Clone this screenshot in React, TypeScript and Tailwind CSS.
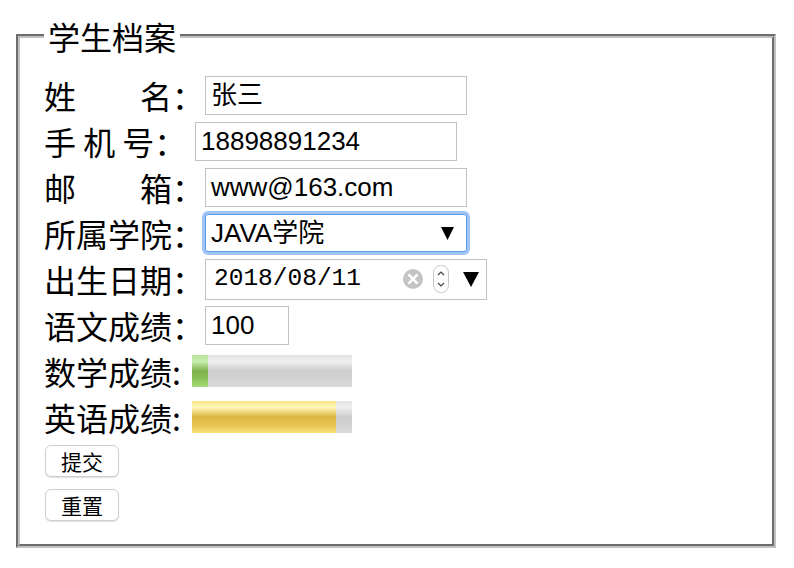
const cjk = "font-['Noto_Sans_CJK_SC',sans-serif]";
const field = "font-['Liberation_Sans','Noto_Sans_CJK_SC',sans-serif]";

const scores = [
  { label: '数学成绩:', value: 0.1, fill: 'bg-[linear-gradient(to_bottom,#b4e29a_0%,#c9eeae_20%,#7eb24a_50%,#8cc25a_75%,#a8dc7c_100%)]' },
  { label: '英语成绩:', value: 0.9, fill: 'bg-[linear-gradient(to_bottom,#fbe487_0%,#fff6b8_20%,#dcb53f_50%,#e6c552_75%,#f8e279_100%)]' },
];

function Row({ label, width, children }: { label: string; width: string; children: React.ReactNode }) {
  return (
    <div className="flex items-center h-[46px]">
      <span className={`${width} shrink-0 whitespace-pre text-[32px] leading-[46px] text-black ${cjk}`}>{label}</span>
      {children}
    </div>
  );
}

function TextBox({ value, width }: { value: string; width: string }) {
  return (
    <div className={`${width} h-[39px] border border-[#c2c2c2] bg-white flex items-center px-[5px] text-[26px] text-black ${field}`}>
      {value}
    </div>
  );
}

export default function App() {
  return (
    <div className="w-[794px] h-[568px] bg-white">
      <fieldset className="ml-4 mt-[18px] w-[760px] h-[530px] border-4 [border-style:groove] border-[#c0c0c0] px-6 pt-[18px]">
        <legend className={`px-1 text-[32px] leading-[36px] text-black ${cjk}`}>学生档案</legend>

        <Row label="姓　　名：" width="w-[161px]">
          <TextBox value="张三" width="w-[262px]" />
        </Row>
        <Row label="手 机 号：" width="w-[151px]">
          <TextBox value="18898891234" width="w-[262px]" />
        </Row>
        <Row label="邮　　箱：" width="w-[161px]">
          <TextBox value="www@163.com" width="w-[262px]" />
        </Row>
        <Row label="所属学院：" width="w-[161px]">
          <div className="w-[262px] h-[38px] rounded-[3px] border border-[#5b98ea] ring-[3px] ring-[#a3c5f6] bg-white flex items-center justify-between pl-[5px] pr-[12px]">
            <span className={`text-[26px] text-black ${field}`}>JAVA学院</span>
            <svg width="13" height="13" viewBox="0 0 13 13">
              <polygon points="0,0 13,0 6.5,13" fill="#000" />
            </svg>
          </div>
        </Row>
        <Row label="出生日期：" width="w-[161px]">
          <div className="w-[282px] h-[41px] border border-[#c2c2c2] bg-white flex items-center pl-[8px]">
            <span className="text-[24.5px] text-black font-['Liberation_Mono',monospace] w-[186px]">2018/08/11</span>
            <svg width="22" height="22" viewBox="0 0 22 22" className="ml-[2px]">
              <circle cx="11" cy="11" r="10" fill="#c4c4c4" />
              <path d="M7.2 7.2 L14.8 14.8 M14.8 7.2 L7.2 14.8" stroke="#fff" strokeWidth="2.6" strokeLinecap="round" />
            </svg>
            <svg width="16" height="28" viewBox="0 0 16 28" className="ml-[9px]">
              <rect x="0.5" y="0.5" width="15" height="27" rx="7" fill="#fff" stroke="#c6c6c6" />
              <path d="M5 10 L8 7 L11 10" stroke="#444" strokeWidth="1.2" fill="none" />
              <path d="M5 18 L8 21 L11 18" stroke="#444" strokeWidth="1.2" fill="none" />
            </svg>
            <svg width="16" height="15" viewBox="0 0 16 15" className="ml-[14px]">
              <polygon points="0,0 16,0 8,15" fill="#000" />
            </svg>
          </div>
        </Row>
        <Row label="语文成绩：" width="w-[161px]">
          <TextBox value="100" width="w-[84px]" />
        </Row>
        {scores.map((s) => (
          <Row key={s.label} label={s.label} width="w-[148px]">
            <div className="w-[160px] h-[32px] flex bg-[linear-gradient(to_bottom,#e3e3e3_0%,#efefef_20%,#cdcdcd_50%,#d2d2d2_75%,#dadada_100%)]">
              <div className={`h-full ${s.fill}`} style={{ width: `${s.value * 100}%` }} />
            </div>
          </Row>
        ))}

        <div className="flex flex-col gap-3 mt-[5px] ml-px">
          {['提交', '重置'].map((t) => (
            <button
              key={t}
              className={`w-[74px] h-[32px] rounded-[6px] border border-[#cfcfcf] bg-white shadow-[0_1px_1px_rgba(0,0,0,0.12)] text-[21px] leading-none text-black ${cjk}`}
            >
              {t}
            </button>
          ))}
        </div>
      </fieldset>
    </div>
  );
}
